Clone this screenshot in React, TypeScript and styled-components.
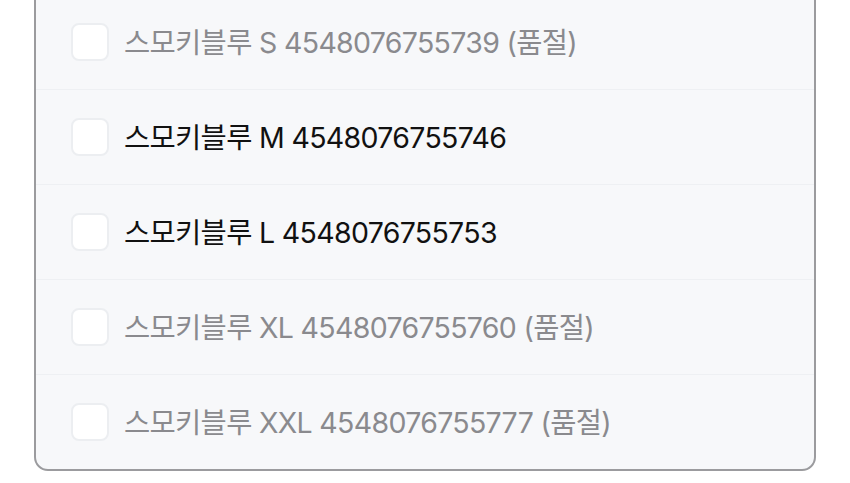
import React from "react";
import styled, { createGlobalStyle } from "styled-components";

const Global = createGlobalStyle`
  html, body { margin: 0; padding: 0; background: #ffffff; overflow: hidden; }
  body { font-family: Inter, "Noto Sans CJK KR", sans-serif; }
`;

const Page = styled.div`
  width: 850px;
  height: 483px;
  padding: 0 34px;
  box-sizing: border-box;
  background: #ffffff;
`;

const Card = styled.div`
  margin-top: -7px;
  border: 2px solid #9b9b9e;
  border-radius: 0 0 14px 14px;
  background: #f7f8fa;
  overflow: hidden;
`;

const Row = styled.label`
  display: flex;
  align-items: center;
  gap: 15px;
  height: 94px;
  padding-left: 35px;
  border-bottom: 1px solid #eef0f3;
  &:last-child { border-bottom: none; height: 94px; }
`;

const Box = styled.span`
  width: 38px;
  height: 38px;
  box-sizing: border-box;
  border: 2px solid #eceef1;
  border-radius: 8px;
  background: #ffffff;
  flex-shrink: 0;
`;

const Label = styled.span<{ $soldOut: boolean }>`
  font-family: Inter, "Noto Sans CJK KR", sans-serif;
  font-size: 28.5px;
  font-weight: 400;
  letter-spacing: -0.68px;
  margin-bottom: 4px;
  color: ${(p) => (p.$soldOut ? "#8a8a8e" : "#111111")};
  white-space: nowrap;
`;

const items = [
  { size: "S", code: "4548076755739", soldOut: true },
  { size: "M", code: "4548076755746", soldOut: false },
  { size: "L", code: "4548076755753", soldOut: false },
  { size: "XL", code: "4548076755760", soldOut: true },
  { size: "XXL", code: "4548076755777", soldOut: true },
];

export default function App() {
  return (
    <>
      <Global />
      <Page>
        <Card>
          {items.map((it) => (
            <Row key={it.code}>
              <Box />
              <Label $soldOut={it.soldOut}>
                스모키블루 {it.size} {it.code}
                {it.soldOut ? " (품절)" : ""}
              </Label>
            </Row>
          ))}
        </Card>
      </Page>
    </>
  );
}
